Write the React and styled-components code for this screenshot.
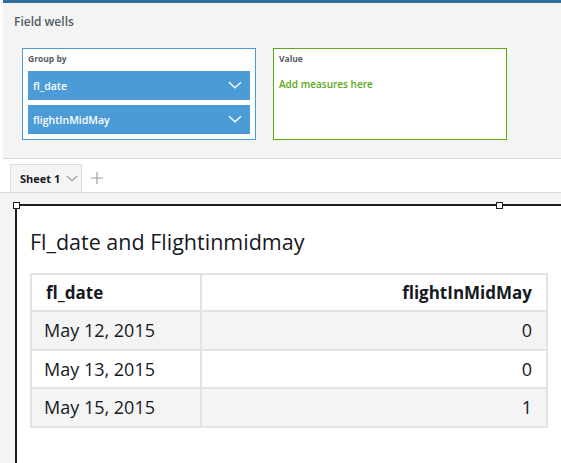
import React from "react";
import styled, { createGlobalStyle } from "styled-components";

const Global = createGlobalStyle`
  html, body {
    margin: 0;
    padding: 0;
    background: #ffffff;
    font-family: "Open Sans", "Noto Sans", sans-serif;
    color: #16191f;
  }
  #root { height: 463px; overflow: hidden; }
`;

const Page = styled.div`
  height: 463px;
  display: flex;
  flex-direction: column;
  overflow: hidden;
`;

const WellsPanel = styled.div`
  height: 159px;
  flex-shrink: 0;
  border-top: 3px solid #31709e;
  border-bottom: 1px solid #d8d8d8;
  background: #f4f4f4;
  margin-left: 3px;
  padding: 11px 0 0 11px;
  box-sizing: border-box;
`;

const PanelTitle = styled.div`
  font-size: 12px;
  font-weight: 600;
  color: #545b64;
  line-height: 16px;
`;

const Wells = styled.div`
  display: flex;
  gap: 17px;
  margin: 18px 0 0 8px;
`;

const Well = styled.div`
  width: 234px;
  height: 92px;
  box-sizing: border-box;
  background: #fff;
  border: 1px solid ${(p) => p.$border};
  padding: 4px 5px 0 5px;
  display: flex;
  flex-direction: column;
  gap: 5px;
`;

const WellLabel = styled.div`
  font-size: 8.5px;
  font-weight: 700;
  color: #545b64;
  line-height: 12px;
  margin-bottom: 1px;
`;

const Pill = styled.div`
  height: 29px;
  background: #4b9bd7;
  color: #fff;
  font-size: 10.5px;
  font-weight: 600;
  display: flex;
  align-items: center;
  justify-content: space-between;
  padding: 0 8px 0 5px;
  box-sizing: border-box;
`;

const Hint = styled.div`
  font-size: 10px;
  font-weight: 600;
  color: #5aa915;
  margin-top: 6px;
`;

const TabStrip = styled.div`
  height: 33px;
  flex-shrink: 0;
  display: flex;
  align-items: flex-end;
  padding-left: 10px;
`;

const Tab = styled.div`
  height: 28px;
  width: 72px;
  box-sizing: border-box;
  border: 1px solid #dcdcdc;
  border-bottom: none;
  background: #f4f4f4;
  display: flex;
  align-items: center;
  padding-left: 9px;
  gap: 6px;
  font-size: 11px;
  font-weight: 700;
  color: #16191f;
`;

const AddTab = styled.div`
  height: 28px;
  display: flex;
  align-items: center;
  padding-left: 9px;
`;

const Canvas = styled.div`
  flex: 1;
  background: #f4f4f4;
  border-top: 1px solid #dcdcdc;
  padding: 11px 0 0 15px;
  display: flex;
`;

const Visual = styled.div`
  position: relative;
  flex: 1;
  background: #fff;
  border-left: 2px solid #1d1d1d;
  border-top: 2px solid #1d1d1d;
  padding: 0 0 0 13px;
`;

const Handle = styled.div`
  position: absolute;
  top: -4px;
  left: ${(p) => p.$left}px;
  width: 5px;
  height: 5px;
  background: #fff;
  border: 1px solid #1d1d1d;
`;

const Title = styled.div`
  font-size: 21.5px;
  color: #16191f;
  margin-top: 23px;
  line-height: 26px;
`;

const Table = styled.table`
  margin-top: 18px;
  width: 518px;
  border-collapse: collapse;
  font-size: 18px;
  color: #16191f;
  td, th {
    border: 2px solid #e3e3e3;
    height: 38.5px;
    padding: 0 14px 0 12px;
    box-sizing: border-box;
  }
  th { font-weight: 700; font-size: 17px; background: #fff; height: 37px; padding-left: 14px; }
  tbody tr:nth-child(odd) td { background: #f4f4f4; }
`;

const Cell = styled.td`
  text-align: ${(p) => (p.$right ? "right" : "left")};
  width: ${(p) => p.$w || "auto"};
`;

const Head = styled.th`
  text-align: ${(p) => (p.$right ? "right" : "left")};
  width: ${(p) => p.$w || "auto"};
`;

const Chevron = ({ color = "#fff", size = 14 }) => (
  <svg width={size} height={size * 0.6} viewBox="0 0 14 8" fill="none">
    <path d="M1 1l6 5.5L13 1" stroke={color} strokeWidth="1.4" />
  </svg>
);

const rows = [
  ["May 12, 2015", "0"],
  ["May 13, 2015", "0"],
  ["May 15, 2015", "1"],
];

export default function App() {
  return (
    <Page>
      <Global />
      <WellsPanel>
        <PanelTitle>Field wells</PanelTitle>
        <Wells>
          <Well $border="#4b9bd7">
            <WellLabel>Group by</WellLabel>
            <Pill>
              fl_date
              <Chevron />
            </Pill>
            <Pill>
              flightInMidMay
              <Chevron />
            </Pill>
          </Well>
          <Well $border="#5aa915">
            <WellLabel>Value</WellLabel>
            <Hint>Add measures here</Hint>
          </Well>
        </Wells>
      </WellsPanel>
      <TabStrip>
        <Tab>
          Sheet 1
          <Chevron color="#9aa0a6" size={12} />
        </Tab>
        <AddTab>
          <svg width="12" height="12" viewBox="0 0 12 12">
            <path d="M6 0v12M0 6h12" stroke="#9aa0a6" strokeWidth="1.2" />
          </svg>
        </AddTab>
      </TabStrip>
      <Canvas>
        <Visual>
          <Handle $left={-4} />
          <Handle $left={479} />
          <Title>Fl_date and Flightinmidmay</Title>
          <Table>
            <thead>
              <tr>
                <Head $w="170px">fl_date</Head>
                <Head $right>flightInMidMay</Head>
              </tr>
            </thead>
            <tbody>
              {rows.map(([d, v]) => (
                <tr key={d}>
                  <Cell>{d}</Cell>
                  <Cell $right>{v}</Cell>
                </tr>
              ))}
            </tbody>
          </Table>
        </Visual>
      </Canvas>
    </Page>
  );
}
